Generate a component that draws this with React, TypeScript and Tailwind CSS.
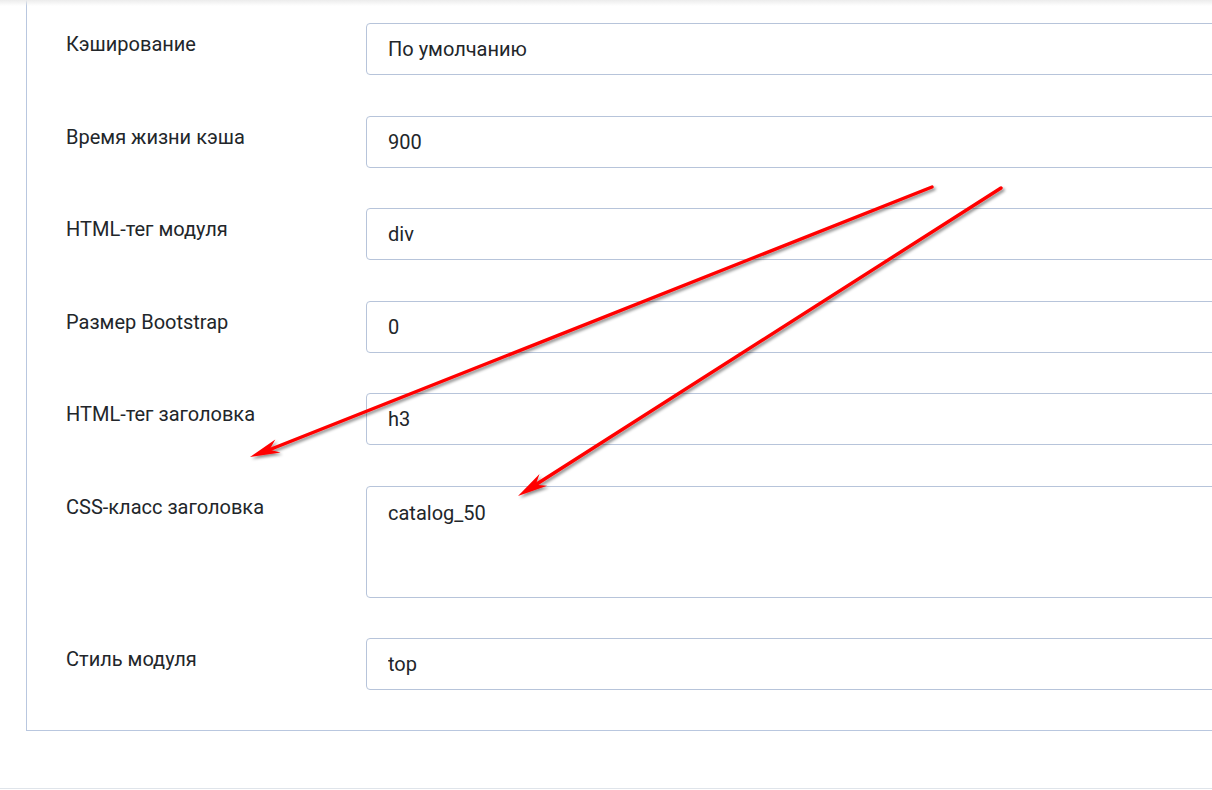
import React from 'react'

type Field = { label: string; value: string; multiline?: boolean }

const fields: Field[] = [
  { label: 'Кэширование', value: 'По умолчанию' },
  { label: 'Время жизни кэша', value: '900' },
  { label: 'HTML-тег модуля', value: 'div' },
  { label: 'Размер Bootstrap', value: '0' },
  { label: 'HTML-тег заголовка', value: 'h3' },
  { label: 'CSS-класс заголовка', value: 'catalog_50', multiline: true },
  { label: 'Стиль модуля', value: 'top' },
]

function Arrows() {
  return (
    <svg
      className="pointer-events-none absolute left-0 top-0"
      width={1212}
      height={790}
      viewBox="0 0 1212 790"
    >
      <defs>
        <filter id="shadow" x="-10%" y="-10%" width="130%" height="130%">
          <feDropShadow dx="2" dy="2" stdDeviation="1.6" floodColor="#000" floodOpacity="0.45" />
        </filter>
      </defs>
      <g filter="url(#shadow)">
        {/* arrow 1 */}
        <line x1={932} y1={187} x2={270} y2={449.5} stroke="#ff0000" strokeWidth={3.4} strokeLinecap="round" />
        <polygon points="250,457 275.3,439.5 269.5,449.8 280.5,452.5" fill="#ff0000" />
        {/* arrow 2 */}
        <line x1={1001} y1={188} x2={536} y2={484.5} stroke="#ff0000" strokeWidth={3.4} strokeLinecap="round" />
        <polygon points="518,496 539.5,474 535.7,484.7 547.1,485.8" fill="#ff0000" />
      </g>
    </svg>
  )
}

export default function App() {
  return (
    <div className="relative h-[790px] w-[1212px] overflow-hidden bg-white font-['Roboto',sans-serif] text-[#22262a]">
      <div className="pointer-events-none absolute inset-x-0 top-0 h-[6px] bg-gradient-to-b from-[#ececec] to-white/0" />

      <div className="pl-[26px]">
        <div className="flex w-[1260px] flex-col gap-[40.5px] border-b border-l border-[#b9c7df] pb-[40px] pl-[39px] pt-[23px]">
          {fields.map((f) => (
            <div key={f.label} className="flex items-start">
              <label className="w-[300px] shrink-0 pt-[6px] text-[20px] leading-[30px]">{f.label}</label>
              {f.multiline ? (
                <textarea
                  readOnly
                  value={f.value}
                  className="h-[112px] flex-1 resize-none rounded-[4px] border border-[#b7c4da] px-[21px] pt-[11px] text-[20px] leading-[30px] outline-none"
                />
              ) : (
                <input
                  readOnly
                  value={f.value}
                  className="h-[52px] flex-1 rounded-[4px] border border-[#b7c4da] px-[21px] text-[20px] outline-none"
                />
              )}
            </div>
          ))}
        </div>
      </div>

      <div className="mt-[57px] border-t border-[#dfe4ea]" />

      <Arrows />
    </div>
  )
}
